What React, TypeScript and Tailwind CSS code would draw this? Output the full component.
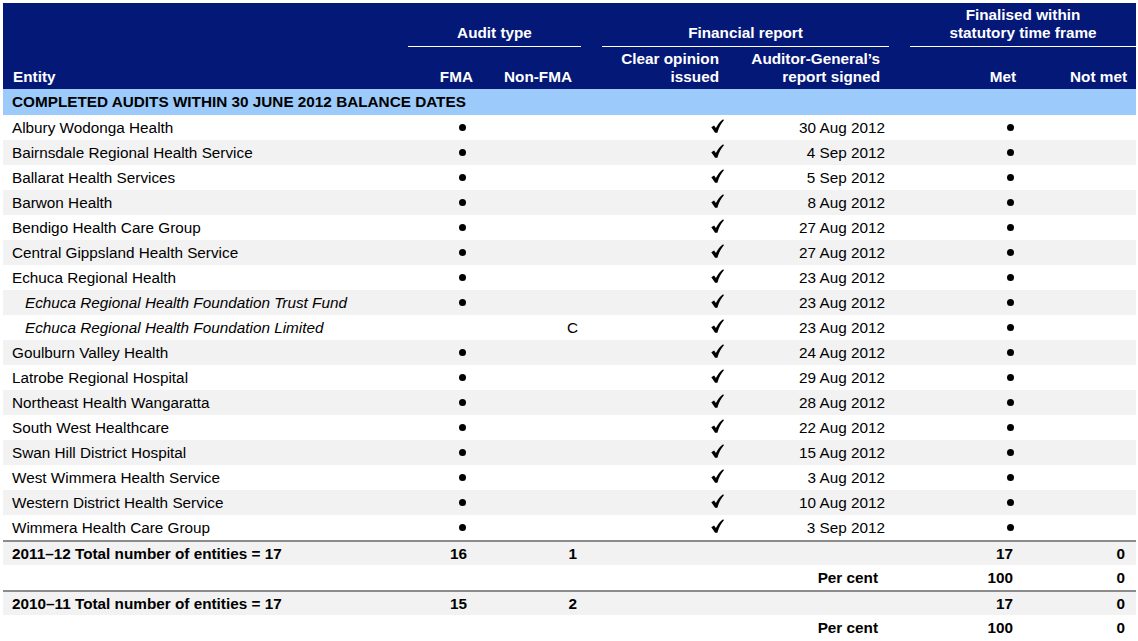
const cols =
  "grid grid-cols-[405px_82px_91px_21px_125px_162px_21px_115px_111px]";

const rows: { name: string; date: string; sub?: boolean; nonFma?: boolean }[] = [
  { name: "Albury Wodonga Health", date: "30 Aug 2012" },
  { name: "Bairnsdale Regional Health Service", date: "4 Sep 2012" },
  { name: "Ballarat Health Services", date: "5 Sep 2012" },
  { name: "Barwon Health", date: "8 Aug 2012" },
  { name: "Bendigo Health Care Group", date: "27 Aug 2012" },
  { name: "Central Gippsland Health Service", date: "27 Aug 2012" },
  { name: "Echuca Regional Health", date: "23 Aug 2012" },
  { name: "Echuca Regional Health Foundation Trust Fund", date: "23 Aug 2012", sub: true },
  { name: "Echuca Regional Health Foundation Limited", date: "23 Aug 2012", sub: true, nonFma: true },
  { name: "Goulburn Valley Health", date: "24 Aug 2012" },
  { name: "Latrobe Regional Hospital", date: "29 Aug 2012" },
  { name: "Northeast Health Wangaratta", date: "28 Aug 2012" },
  { name: "South West Healthcare", date: "22 Aug 2012" },
  { name: "Swan Hill District Hospital", date: "15 Aug 2012" },
  { name: "West Wimmera Health Service", date: "3 Aug 2012" },
  { name: "Western District Health Service", date: "10 Aug 2012" },
  { name: "Wimmera Health Care Group", date: "3 Sep 2012" },
];

const Dot = () => <span className="block h-[7px] w-[7px] rounded-full bg-black" />;

// calligraphic tick, thick short stroke + tapering long stroke
const Tick = () => (
  <svg width="13" height="14" viewBox="0 0 13 14" className="-mt-[3px]">
    <path
      d="M0.3 8.3 L3.1 6.5 L4.9 9.1 C6.7 5.3 9.1 2.2 12.1 0.2 L12.9 1.3 C10.2 4.3 8 8.3 6.4 13.7 L4.1 13.7 Z"
      fill="#000"
    />
  </svg>
);

const TotalRows = ({ label, fma, nonFma }: { label: string; fma: string; nonFma: string }) => (
  <>
    <div className={`${cols} h-[25px] items-center border-t-2 border-[#8c8c8c] bg-[#f2f2f2] font-bold`}>
      <div className="pl-[9px]">{label}</div>
      <div className="pr-[23px] text-right">{fma}</div>
      <div className="pr-[4px] text-right">{nonFma}</div>
      <div />
      <div />
      <div />
      <div />
      <div className="pr-[12px] text-right">17</div>
      <div className="pr-[11px] text-right">0</div>
    </div>
    <div className={`${cols} h-[25px] items-center bg-white font-bold`}>
      <div />
      <div />
      <div />
      <div />
      <div />
      <div className="pr-[11px] text-right">Per cent</div>
      <div />
      <div className="pr-[12px] text-right">100</div>
      <div className="pr-[11px] text-right">0</div>
    </div>
  </>
);

export default function App() {
  return (
    <div className="h-[641px] w-[1138px] bg-white pt-[3px] pl-[3px] font-['Liberation_Sans',Arial,sans-serif] text-[15.3px] leading-[18px] text-black">
      <div className="w-[1133px]">
        {/* header */}
        <div className={`${cols} h-[86px] grid-rows-[44px_42px] bg-[#041878] font-bold text-white`}>
          <div className="row-span-2 flex items-end pb-[3px] pl-[10px]">Entity</div>
          <div className="col-span-2 flex items-end justify-center border-b border-white pb-[4px]">Audit type</div>
          <div className="row-span-2" />
          <div className="col-span-2 flex items-end justify-center border-b border-white pb-[4px]">Financial report</div>
          <div className="row-span-2" />
          <div className="col-span-2 flex items-end justify-center border-b border-white pb-[4px] text-center">
            Finalised within
            <br />
            statutory time frame
          </div>
          <div className="flex items-end justify-end pb-[3px] pr-[17px]">FMA</div>
          <div className="flex items-end justify-end pb-[3px] pr-[9px]">Non-FMA</div>
          <div className="flex items-end justify-end pb-[3px] pr-[8px] text-right">
            Clear opinion
            <br />
            issued
          </div>
          <div className="flex items-end justify-end pb-[3px] pr-[9px] text-right">
            Auditor-General’s
            <br />
            report signed
          </div>
          <div className="flex items-end justify-end pb-[3px] pr-[9px]">Met</div>
          <div className="flex items-end justify-end pb-[3px] pr-[9px]">Not met</div>
        </div>

        {/* section band */}
        <div className="flex h-[26px] items-center bg-[#9ccafb] pl-[9px] font-bold">
          COMPLETED AUDITS WITHIN 30 JUNE 2012 BALANCE DATES
        </div>

        {rows.map((r, i) => (
          <div
            key={r.name}
            className={`${cols} h-[25px] items-center ${i % 2 === 1 ? "bg-[#f2f2f2]" : "bg-white"}`}
          >
            <div className={r.sub ? "pl-[22px] italic" : "pl-[9px]"}>{r.name}</div>
            <div className="flex justify-end pr-[24px]">{!r.nonFma && <Dot />}</div>
            <div className="pr-[3px] text-right">{r.nonFma ? "C" : ""}</div>
            <div />
            <div className="flex justify-end pr-[3px]">
              <Tick />
            </div>
            <div className="pr-[4px] text-right">{r.date}</div>
            <div />
            <div className="flex justify-end pr-[11px]">
              <Dot />
            </div>
            <div />
          </div>
        ))}

        <TotalRows label="2011–12 Total number of entities = 17" fma="16" nonFma="1" />
        <TotalRows label="2010–11 Total number of entities = 17" fma="15" nonFma="2" />
      </div>
    </div>
  );
}
